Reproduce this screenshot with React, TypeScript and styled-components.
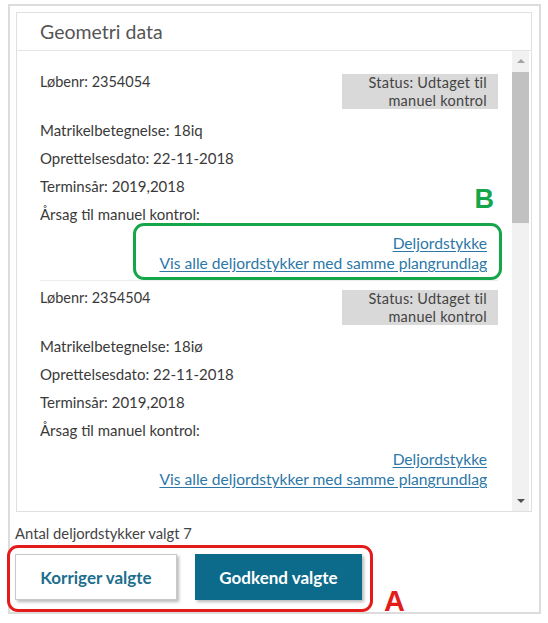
import React from 'react';
import styled, { createGlobalStyle } from 'styled-components';

interface Parcel {
  id: number;
  lobenr: string;
  matrikel: string;
  oprettet: string;
  terminsar: string;
  highlighted?: boolean;
}

const parcels: Parcel[] = [
  { id: 1, lobenr: '2354054', matrikel: '18iq', oprettet: '22-11-2018', terminsar: '2019,2018', highlighted: true },
  { id: 2, lobenr: '2354504', matrikel: '18iø', oprettet: '22-11-2018', terminsar: '2019,2018' },
];

const GlobalStyle = createGlobalStyle`
  body {
    margin: 0;
    background: #ffffff;
    font-family: Lato, "Open Sans", "Liberation Sans", sans-serif;
    color: #3a3a3a;
  }
`;

const App: React.FC = () => {
  return (
    <>
      <GlobalStyle />
      <Frame>
        <Panel>
          <PanelHeader>
            <PanelTitle>Geometri data</PanelTitle>
          </PanelHeader>
          <PanelBody>
            <ScrollContent>
              {parcels.map(parcel => (
                <Record key={parcel.id}>
                  <TopRow>
                    <Field>Løbenr: {parcel.lobenr}</Field>
                    <StatusTag>
                      Status: Udtaget til
                      <br />
                      manuel kontrol
                    </StatusTag>
                  </TopRow>
                  <Field $first>Matrikelbetegnelse: {parcel.matrikel}</Field>
                  <Field>Oprettelsesdato: {parcel.oprettet}</Field>
                  <Field>Terminsår: {parcel.terminsar}</Field>
                  <Field>Årsag til manuel kontrol:</Field>
                  <LinksBlock>
                    <DataLink href="#">Deljordstykke</DataLink>
                    <DataLink href="#">Vis alle deljordstykker med samme plangrundlag</DataLink>
                    {parcel.highlighted && (
                      <>
                        <Callout $color="#15a64c" $inset="0" />
                        <CalloutLetter $color="#15a64c" $size={27} style={{ top: -37, right: 8 }}>
                          B
                        </CalloutLetter>
                      </>
                    )}
                  </LinksBlock>
                </Record>
              ))}
            </ScrollContent>
            <ScrollTrack>
              <ScrollButton>
                <Arrow $dir="up" />
              </ScrollButton>
              <ScrollThumb />
              <TrackSpace />
              <ScrollButton>
                <Arrow $dir="down" />
              </ScrollButton>
            </ScrollTrack>
          </PanelBody>
        </Panel>
        <Footer>
          <SelectedCount>Antal deljordstykker valgt 7</SelectedCount>
          <ButtonRow>
            <ActionButton>Korriger valgte</ActionButton>
            <ActionButton $primary>Godkend valgte</ActionButton>
            <Callout $color="#e41b1b" $inset="-9px -11px -12px -8px" />
            <CalloutLetter $color="#e41b1b" $size={29} style={{ top: 33, left: 'calc(100% + 22px)' }}>
              A
            </CalloutLetter>
          </ButtonRow>
        </Footer>
      </Frame>
    </>
  );
};

const Frame = styled.div`
  box-sizing: border-box;
  width: 533px;
  height: 610px;
  margin: 4px 0 0 8px;
  padding: 6px 7px 0 6px;
  border: 2px solid #dcdcdc;
  background: #ffffff;
`;

const Panel = styled.section`
  box-sizing: border-box;
  width: 516px;
  height: 500px;
  border: 1px solid #e0e0e0;
  display: flex;
  flex-direction: column;
`;

const PanelHeader = styled.header`
  height: 37px;
  display: flex;
  align-items: center;
  padding-left: 23px;
  border-bottom: 1px solid #e4e4e4;
`;

const PanelTitle = styled.h2`
  margin: 0;
  font-size: 19.5px;
  font-weight: 400;
  color: #555555;
`;

const PanelBody = styled.div`
  flex: 1;
  display: flex;
  min-height: 0;
`;

const ScrollContent = styled.div`
  flex: 1;
  overflow: hidden;
  padding: 14px 14px 0 23px;
`;

const Record = styled.div`
  display: flex;
  flex-direction: column;
  padding-top: 7px;

  & + & {
    border-top: 1px solid #ececec;
  }
`;

const TopRow = styled.div`
  display: flex;
  justify-content: space-between;
  align-items: flex-start;
  height: 37px;
`;

const Field = styled.div<{ $first?: boolean }>`
  font-size: 15px;
  line-height: 20px;
  margin-top: ${props => (props.$first ? '11px' : '8px')};
  color: #3a3a3a;

  ${TopRow} & {
    margin-top: 0;
    font-size: 14.5px;
  }
`;

const StatusTag = styled.div`
  box-sizing: border-box;
  width: 156px;
  height: 35px;
  margin-top: 2px;
  padding: 0 11px 0 4px;
  background: #d9d9d9;
  font-size: 14.5px;
  line-height: 17.5px;
  letter-spacing: 0.25px;
  text-align: right;
  white-space: nowrap;
  color: #444444;
`;

const LinksBlock = styled.div`
  position: relative;
  align-self: flex-end;
  box-sizing: border-box;
  width: 369px;
  margin: -1px -4px 0 0;
  padding: 10px 15px 7px 0;
  display: flex;
  flex-direction: column;
  align-items: flex-end;
`;

const DataLink = styled.a`
  font-size: 15.6px;
  line-height: 20px;
  color: #2d77a7;
  text-decoration: underline;
  text-underline-offset: 2px;
  white-space: nowrap;
`;

const Callout = styled.span<{ $color: string; $inset: string }>`
  position: absolute;
  inset: ${props => props.$inset};
  border: 3px solid ${props => props.$color};
  border-radius: 11px;
  pointer-events: none;
`;

const CalloutLetter = styled.span<{ $color: string; $size: number }>`
  position: absolute;
  font-family: "Liberation Sans", Arial, sans-serif;
  font-weight: 700;
  font-size: ${props => props.$size}px;
  line-height: 1;
  color: ${props => props.$color};
`;

const ScrollTrack = styled.div`
  width: 17px;
  margin-right: 2px;
  background: #f1f1f1;
  display: flex;
  flex-direction: column;
`;

const ScrollButton = styled.div`
  height: 20px;
  display: flex;
  align-items: center;
  justify-content: center;
`;

const Arrow = styled.span<{ $dir: 'up' | 'down' }>`
  width: 0;
  height: 0;
  border-left: 4px solid transparent;
  border-right: 4px solid transparent;
  ${props =>
    props.$dir === 'up'
      ? 'border-bottom: 4px solid #a3a3a3;'
      : 'border-top: 4px solid #505050;'}
`;

const ScrollThumb = styled.div`
  height: 151px;
  margin-top: 1px;
  background: #c1c1c1;
`;

const TrackSpace = styled.div`
  flex: 1;
`;

const Footer = styled.div`
  margin-left: -1px;
`;

const SelectedCount = styled.div`
  margin-top: 11px;
  font-size: 14.8px;
  line-height: 20px;
  color: #444444;
`;

const ButtonRow = styled.div`
  position: relative;
  display: flex;
  gap: 18px;
  width: fit-content;
  margin-top: 11px;
`;

const ActionButton = styled.button<{ $primary?: boolean }>`
  height: 46px;
  width: ${props => (props.$primary ? '167px' : '162px')};
  padding: 0;
  font-family: Lato, "Open Sans", sans-serif;
  font-size: 17px;
  font-weight: 700;
  border: 1px solid ${props => (props.$primary ? '#0c6a8a' : '#c9c9c9')};
  background: ${props => (props.$primary ? '#0c6a8a' : '#ffffff')};
  color: ${props => (props.$primary ? '#ffffff' : '#1d6e8e')};
  box-shadow: 2px 2px 3px rgba(0, 0, 0, 0.28);
  cursor: pointer;
`;

export default App;
